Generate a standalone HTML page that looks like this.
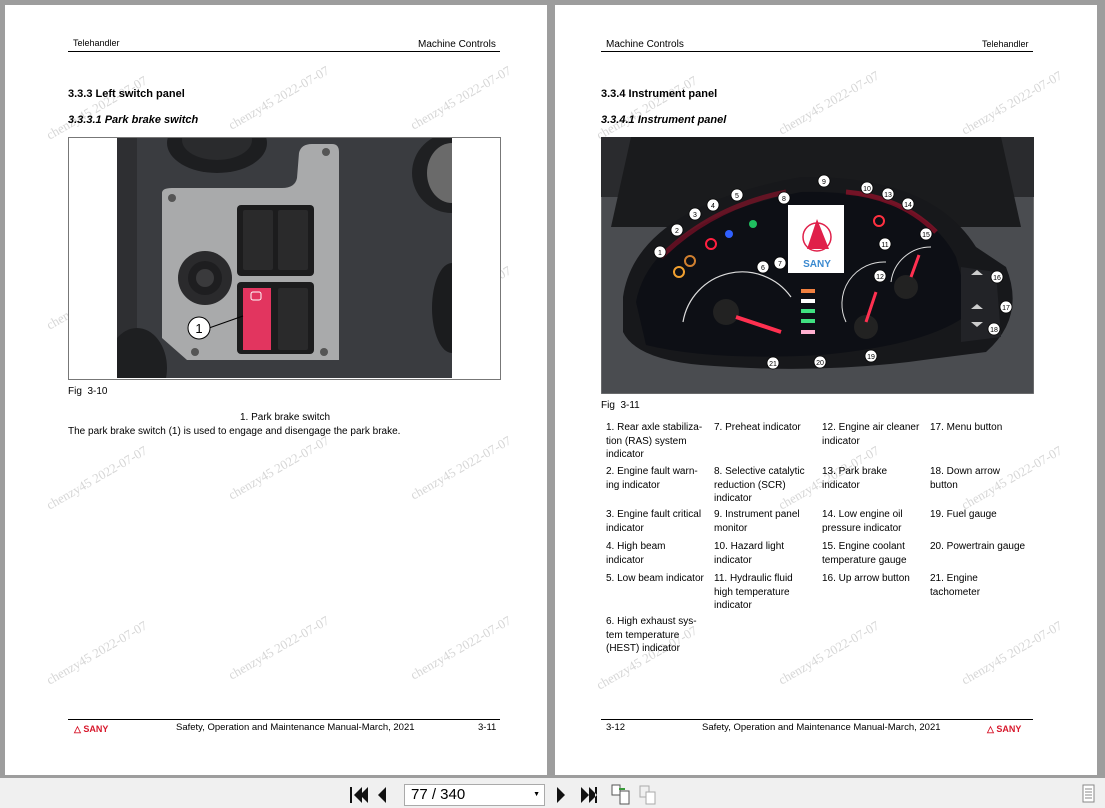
<!DOCTYPE html>
<html><head><meta charset="utf-8"><style>
*{margin:0;padding:0;box-sizing:border-box}
body{width:1105px;height:808px;background:#9d9d9d;position:relative;overflow:hidden;font-family:"Liberation Sans",Arial,sans-serif;color:#000}
.page{position:absolute;top:5px;width:542px;height:770px;background:#fff}
.t{position:absolute;font-size:10px;white-space:nowrap;line-height:13.5px}
.hl{position:absolute;height:1px;background:#000}
.wm{position:absolute;font-family:"Liberation Serif",serif;font-size:13px;color:#d6d6d6;transform:rotate(-30deg);white-space:nowrap}
.toolbar{position:absolute;left:0;top:778px;width:1105px;height:30px;background:#f0f0f0}
.lg{position:absolute;font-size:10px;line-height:13.5px;width:104px}
</style></head><body>
<div class="page" style="left:5px"></div>
<div class="page" style="left:555px"></div>

<div class="wm" style="left:40px;top:100px">chenzy45 2022-07-07</div>
<div class="wm" style="left:222px;top:90px">chenzy45 2022-07-07</div>
<div class="wm" style="left:404px;top:90px">chenzy45 2022-07-07</div>
<div class="wm" style="left:40px;top:290px">chenzy45 2022-07-07</div>
<div class="wm" style="left:404px;top:290px">chenzy45 2022-07-07</div>
<div class="wm" style="left:40px;top:470px">chenzy45 2022-07-07</div>
<div class="wm" style="left:222px;top:460px">chenzy45 2022-07-07</div>
<div class="wm" style="left:404px;top:460px">chenzy45 2022-07-07</div>
<div class="wm" style="left:40px;top:645px">chenzy45 2022-07-07</div>
<div class="wm" style="left:222px;top:640px">chenzy45 2022-07-07</div>
<div class="wm" style="left:404px;top:640px">chenzy45 2022-07-07</div>
<div class="wm" style="left:590px;top:100px">chenzy45 2022-07-07</div>
<div class="wm" style="left:772px;top:95px">chenzy45 2022-07-07</div>
<div class="wm" style="left:955px;top:95px">chenzy45 2022-07-07</div>
<div class="wm" style="left:772px;top:470px">chenzy45 2022-07-07</div>
<div class="wm" style="left:955px;top:470px">chenzy45 2022-07-07</div>
<div class="wm" style="left:590px;top:650px">chenzy45 2022-07-07</div>
<div class="wm" style="left:772px;top:645px">chenzy45 2022-07-07</div>
<div class="wm" style="left:955px;top:645px">chenzy45 2022-07-07</div>

<!-- left page -->
<div class="t" style="left:73px;top:37px;font-size:9px">Telehandler</div>
<div class="t" style="left:418px;top:38px">Machine Controls</div>
<div class="hl" style="left:68px;top:51px;width:432px"></div>
<div class="t" style="left:68px;top:88px;font-weight:bold;font-size:11px">3.3.3 Left switch panel</div>
<div class="t" style="left:68px;top:114px;font-weight:bold;font-style:italic;font-size:11px">3.3.3.1 Park brake switch</div>
<div style="position:absolute;left:68px;top:137px;width:433px;height:243px;border:1px solid #777;background:#fff"></div>
<svg style="position:absolute;left:117px;top:138px" width="335" height="240" viewBox="0 0 335 240">
<rect width="335" height="240" fill="#3a3c40"/>
<rect x="0" y="0" width="20" height="240" fill="#2e2f32"/>
<ellipse cx="100" cy="5" rx="50" ry="30" fill="#1d1e20"/>
<ellipse cx="100" cy="2" rx="35" ry="20" fill="#2a2b2d"/>
<ellipse cx="335" cy="35" rx="40" ry="40" fill="#1f2022"/>
<ellipse cx="335" cy="35" rx="25" ry="30" fill="#6a6a6a"/>
<ellipse cx="20" cy="230" rx="30" ry="40" fill="#1e1f21"/>
<ellipse cx="335" cy="170" rx="20" ry="45" fill="#1b1c1e"/>
<path d="M45 55 Q45 50 55 50 L165 50 Q178 50 180 40 L182 15 Q184 6 195 6 L215 6 Q222 6 222 14 L222 222 L70 222 L45 200 Z" fill="#a9aaab"/>
<circle cx="55" cy="60" r="4" fill="#555"/><circle cx="209" cy="14" r="4" fill="#555"/>
<circle cx="78" cy="214" r="4" fill="#555"/><circle cx="207" cy="214" r="4" fill="#555"/>
<rect x="120" y="67" width="77" height="71" rx="4" fill="#1c1c1d"/>
<rect x="126" y="72" width="30" height="60" rx="2" fill="#2a2a2b"/><rect x="161" y="72" width="30" height="60" rx="2" fill="#2a2a2b"/>
<rect x="120" y="144" width="77" height="72" rx="4" fill="#1c1c1d"/>
<rect x="126" y="150" width="28" height="62" fill="#e2355f"/>
<rect x="134" y="154" width="10" height="8" rx="2" fill="none" stroke="#fff" stroke-width="1"/>
<rect x="161" y="150" width="30" height="62" rx="2" fill="#2a2a2b"/>
<circle cx="88" cy="140" r="27" fill="#2a2a2c"/><circle cx="88" cy="140" r="17" fill="#1e1e20"/><circle cx="88" cy="140" r="9" fill="#3a3a3c"/>
<line x1="92" y1="190" x2="126" y2="178" stroke="#000" stroke-width="1"/>
<circle cx="82" cy="190" r="11" fill="#fff" stroke="#000"/>
<text x="82" y="195" font-size="13" text-anchor="middle" font-family="Liberation Sans">1</text>
</svg>
<div class="t" style="left:68px;top:385px">Fig&nbsp; 3-10</div>
<div class="t" style="left:240px;top:411px">1. Park brake switch</div>
<div class="t" style="left:68px;top:425px">The park brake switch (1) is used to engage and disengage the park brake.</div>
<div class="hl" style="left:68px;top:719px;width:432px"></div>
<div class="t" style="left:74px;top:723px;color:#d8182c;font-weight:bold;font-size:9px">&#9651; SANY</div>
<div class="t" style="left:176px;top:721px;font-size:9.5px">Safety, Operation and Maintenance Manual-March, 2021</div>
<div class="t" style="left:478px;top:721px;font-size:9.5px">3-11</div>

<!-- right page -->
<div class="t" style="left:606px;top:38px">Machine Controls</div>
<div class="t" style="left:982px;top:38px;font-size:9px">Telehandler</div>
<div class="hl" style="left:601px;top:51px;width:432px"></div>
<div class="t" style="left:601px;top:88px;font-weight:bold;font-size:11px">3.3.4 Instrument panel</div>
<div class="t" style="left:601px;top:114px;font-weight:bold;font-style:italic;font-size:11px">3.3.4.1 Instrument panel</div>
<svg style="position:absolute;left:601px;top:137px" width="433" height="257" viewBox="0 0 433 257" font-family="Liberation Sans">
<rect width="433" height="257" fill="#4a4c50" stroke="#888"/>
<rect x="0" y="0" width="433" height="60" fill="#2a2b2e"/>
<path d="M30 0 L400 0 L420 90 L10 90 Z" fill="#1a1b1d"/>
<path d="M22 160 Q35 70 200 40 Q330 38 375 110 L405 130 Q425 180 385 215 L330 222 Q220 238 100 228 Q35 222 22 195 Z" fill="#17181b"/>
<path d="M35 165 Q50 85 200 55 Q320 52 355 120 L370 175 Q330 208 220 218 Q110 224 45 208 Z" fill="#0d0f15"/>
<path d="M360 130 L395 135 L400 200 L360 205 Z" fill="#222327"/>
<path d="M60 120 Q110 70 185 55" stroke="#c01030" stroke-width="5" fill="none" opacity=".45"/>
<path d="M245 55 Q300 60 335 95" stroke="#c01030" stroke-width="5" fill="none" opacity=".55"/>
<rect x="187" y="68" width="56" height="68" fill="#fff"/>
<path d="M216 82 L206 112 L228 112 Z" fill="#e0204a"/>
<circle cx="216" cy="100" r="14" fill="none" stroke="#e0204a" stroke-width="1.5"/>
<text x="216" y="130" font-size="10" font-weight="bold" fill="#3b8ad0" text-anchor="middle">SANY</text>
<path d="M82 185 A60 60 0 0 1 190 160" stroke="#ddd" stroke-width="1.2" fill="none"/>
<circle cx="125" cy="175" r="13" fill="#222"/>
<line x1="135" y1="180" x2="180" y2="195" stroke="#ff3050" stroke-width="4"/>
<path d="M245 185 A42 42 0 0 1 285 125" stroke="#ddd" stroke-width="1" fill="none"/>
<circle cx="265" cy="190" r="12" fill="#222"/>
<line x1="265" y1="185" x2="275" y2="155" stroke="#ff3050" stroke-width="3"/>
<path d="M290 145 A40 40 0 0 1 330 110" stroke="#ddd" stroke-width="1" fill="none"/>
<circle cx="305" cy="150" r="12" fill="#222"/>
<line x1="310" y1="140" x2="318" y2="118" stroke="#ff3050" stroke-width="3"/>
<rect x="200" y="152" width="14" height="4" fill="#f08040"/>
<rect x="200" y="162" width="14" height="4" fill="#fff"/>
<rect x="200" y="172" width="14" height="4" fill="#40e080"/>
<rect x="200" y="182" width="14" height="4" fill="#40e080"/>
<rect x="200" y="193" width="14" height="4" fill="#ffb0d0"/>
<circle cx="78" cy="135" r="5" fill="none" stroke="#f0a030" stroke-width="2"/>
<circle cx="89" cy="124" r="5" fill="none" stroke="#d08030" stroke-width="2"/>
<circle cx="110" cy="107" r="5" fill="none" stroke="#ff2040" stroke-width="2"/>
<circle cx="128" cy="97" r="4" fill="#3060ff"/>
<circle cx="152" cy="87" r="4" fill="#20c060"/>
<circle cx="278" cy="84" r="5" fill="none" stroke="#ff3040" stroke-width="2"/>
<path d="M370 138 l6 -5 l6 5 z M370 172 l6 -5 l6 5 z M370 185 l6 5 l6 -5 z" fill="#ccc"/>
<g font-size="7" text-anchor="middle">
<g fill="#fff" stroke="#000" stroke-width=".8">
<circle cx="59" cy="115" r="6"/><circle cx="76" cy="93" r="6"/><circle cx="94" cy="77" r="6"/><circle cx="112" cy="68" r="6"/><circle cx="136" cy="58" r="6"/><circle cx="162" cy="130" r="6"/><circle cx="179" cy="126" r="6"/><circle cx="183" cy="61" r="6"/><circle cx="223" cy="44" r="6"/><circle cx="266" cy="51" r="6"/><circle cx="284" cy="107" r="6"/><circle cx="279" cy="139" r="6"/><circle cx="287" cy="57" r="6"/><circle cx="307" cy="67" r="6"/><circle cx="325" cy="97" r="6"/><circle cx="396" cy="140" r="6"/><circle cx="405" cy="170" r="6"/><circle cx="393" cy="192" r="6"/><circle cx="270" cy="219" r="6"/><circle cx="219" cy="225" r="6"/><circle cx="172" cy="226" r="6"/>
</g>
<text x="59" y="118">1</text><text x="76" y="96">2</text><text x="94" y="80">3</text><text x="112" y="71">4</text><text x="136" y="61">5</text><text x="162" y="133">6</text><text x="179" y="129">7</text><text x="183" y="64">8</text><text x="223" y="47">9</text><text x="266" y="54">10</text><text x="284" y="110">11</text><text x="279" y="142">12</text><text x="287" y="60">13</text><text x="307" y="70">14</text><text x="325" y="100">15</text><text x="396" y="143">16</text><text x="405" y="173">17</text><text x="393" y="195">18</text><text x="270" y="222">19</text><text x="219" y="228">20</text><text x="172" y="229">21</text>
</g>
</svg>
<div class="t" style="left:601px;top:399px">Fig&nbsp; 3-11</div>

<div class="lg" style="left:606px;top:421px">1. Rear axle stabiliza-<br>tion (RAS) system<br>indicator</div>
<div class="lg" style="left:714px;top:421px">7. Preheat indicator</div>
<div class="lg" style="left:822px;top:421px">12. Engine air cleaner<br>indicator</div>
<div class="lg" style="left:930px;top:421px">17. Menu button</div>
<div class="lg" style="left:606px;top:465px">2. Engine fault warn-<br>ing indicator</div>
<div class="lg" style="left:714px;top:465px">8. Selective catalytic<br>reduction (SCR)<br>indicator</div>
<div class="lg" style="left:822px;top:465px">13. Park brake<br>indicator</div>
<div class="lg" style="left:930px;top:465px">18. Down arrow<br>button</div>
<div class="lg" style="left:606px;top:508px">3. Engine fault critical<br>indicator</div>
<div class="lg" style="left:714px;top:508px">9. Instrument panel<br>monitor</div>
<div class="lg" style="left:822px;top:508px">14. Low engine oil<br>pressure indicator</div>
<div class="lg" style="left:930px;top:508px">19. Fuel gauge</div>
<div class="lg" style="left:606px;top:540px">4. High beam<br>indicator</div>
<div class="lg" style="left:714px;top:540px">10. Hazard light<br>indicator</div>
<div class="lg" style="left:822px;top:540px">15. Engine coolant<br>temperature gauge</div>
<div class="lg" style="left:930px;top:540px">20. Powertrain gauge</div>
<div class="lg" style="left:606px;top:572px">5. Low beam indicator</div>
<div class="lg" style="left:714px;top:572px">11. Hydraulic fluid<br>high temperature<br>indicator</div>
<div class="lg" style="left:822px;top:572px">16. Up arrow button</div>
<div class="lg" style="left:930px;top:572px">21. Engine<br>tachometer</div>
<div class="lg" style="left:606px;top:615px">6. High exhaust sys-<br>tem temperature<br>(HEST) indicator</div>

<div class="hl" style="left:601px;top:719px;width:432px"></div>
<div class="t" style="left:606px;top:721px;font-size:9.5px">3-12</div>
<div class="t" style="left:702px;top:721px;font-size:9.5px">Safety, Operation and Maintenance Manual-March, 2021</div>
<div class="t" style="left:987px;top:723px;color:#d8182c;font-weight:bold;font-size:9px">&#9651; SANY</div>

<div class="toolbar">
<svg style="position:absolute;left:348px;top:8px" width="50" height="18"><path d="M2 1h2v16h-2zM14 1v16l-8-8zM20 1v16l-8-8z" fill="#111"/><path d="M38 1v16l-8-8z" fill="#111"/></svg>
<div style="position:absolute;left:404px;top:6px;width:141px;height:22px;background:#fff;border:1px solid #aaa;font-size:15px;padding:1px 6px">77 / 340<span style="position:absolute;right:4px;top:6px;font-size:7px">&#9660;</span></div>
<svg style="position:absolute;left:555px;top:8px" width="50" height="18"><path d="M2 1v16l8-8zM26 1v16l8-8zM34 1v16l8-8zM40 1h2v16h-2z" fill="#111"/></svg>
<svg style="position:absolute;left:610px;top:5px" width="55" height="24"><rect x="2" y="2" width="8" height="10" fill="#fff" stroke="#555"/><rect x="10" y="8" width="9" height="13" fill="#fff" stroke="#555"/><path d="M9 6h6" stroke="#3a9a3a" stroke-width="2"/><rect x="30" y="3" width="9" height="11" fill="none" stroke="#aaa"/><rect x="36" y="9" width="9" height="12" fill="#fff" stroke="#aaa"/></svg>
<svg style="position:absolute;left:1082px;top:6px" width="14" height="20"><rect x="1" y="1" width="11" height="17" fill="#fff" stroke="#888"/><path d="M3 5h7M3 8h7M3 11h7M3 14h7" stroke="#888"/></svg>
</div>
</body></html>
